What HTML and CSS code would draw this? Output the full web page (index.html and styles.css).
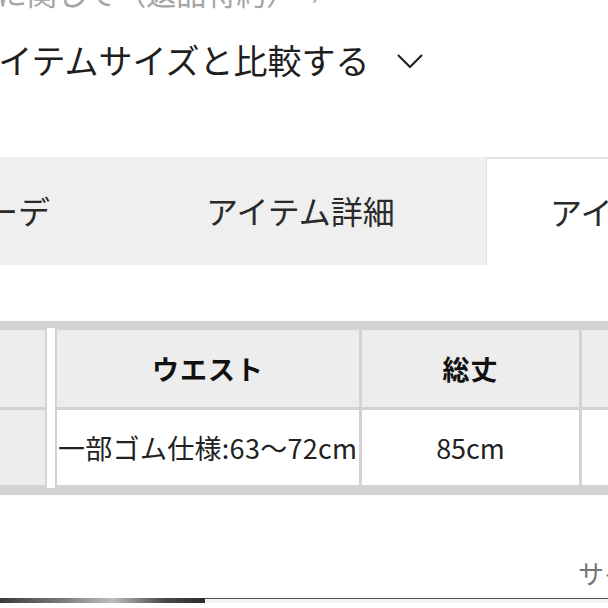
FILE: index.html
```html
<!DOCTYPE html>
<html lang="ja">
<head>
<meta charset="utf-8">
<link rel="stylesheet" href="styles.css">
</head>
<body>
<div class="page">
  <div class="top-link"><span class="top-link-text">サイズに関して（返品特約）　›</span></div>
  <div class="compare">
    <span class="compare-text">アイテムサイズと比較する</span>
    <svg class="chevron" width="28" height="18" viewBox="0 0 28 18"><path d="M2 4 L14 16 L26 4" fill="none" stroke="#222" stroke-width="2.2"/></svg>
  </div>
  <div class="tabs">
    <div class="tab tab-coord">コーデ</div>
    <div class="tab tab-detail">アイテム詳細</div>
    <div class="tab tab-size active">アイテムサイズ</div>
  </div>
  <div class="table-wrap">
    <div class="size-table">
      <div class="cell head c0"></div>
      <div class="strip"></div>
      <div class="cell head">ウエスト</div>
      <div class="cell head">総丈</div>
      <div class="cell head"></div>
      <div class="cell body c0"></div>
      <div class="cell body">一部ゴム仕様:63〜72cm</div>
      <div class="cell body">85cm</div>
      <div class="cell body"></div>
    </div>
  </div>
  <div class="guide"><span class="guide-text">サイズガイド</span></div>
  <div class="bottom-bar"><div class="bar-dark"></div><div class="bar-light"></div></div>
</div>
</body>
</html>
```
FILE: styles.css
```css
html, body {
  margin: 0;
  padding: 0;
  background: #fff;
}
body {
  font-family: "Noto Sans CJK JP", "Noto Sans", sans-serif;
  color: #222;
  width: 608px;
  height: 608px;
  overflow: hidden;
}
.page {
  width: 608px;
  height: 608px;
  overflow: hidden;
  display: flex;
  flex-direction: column;
}
.top-link {
  height: 11px;
  overflow: hidden;
  flex: none;
}
.top-link-text {
  display: block;
  font-size: 30px;
  line-height: 30px;
  margin-top: -23px;
  margin-left: -92px;
  color: #a5a5a5;
  white-space: nowrap;
}
.compare {
  flex: none;
  display: flex;
  align-items: center;
  height: 40px;
  margin-top: 29px;
  white-space: nowrap;
}
.compare-text {
  font-size: 34px;
  line-height: 40px;
  margin-left: -34px;
  color: #1e1e1e;
}
.chevron {
  margin-left: 26px;
  margin-top: 0;
}
.tabs {
  flex: none;
  display: flex;
  height: 108px;
  margin-top: 77px;
  white-space: nowrap;
}
.tab {
  background: #efefef;
  font-size: 32px;
  line-height: 106px;
  color: #2a2a2a;
  overflow: hidden;
  flex: none;
}
.tab-coord {
  width: 143px;
  text-indent: -46px;
}
.tab-detail {
  width: 343px;
  text-indent: 63px;
}
.tab-size {
  width: 200px;
  text-indent: 63px;
}
.tab.active {
  background: #fff;
  border-top: 2px solid #e2e2e2;
  border-left: 1px solid #e0e0e0;
  line-height: 104px;
}
.table-wrap {
  flex: none;
  margin-top: 56px;
  overflow: hidden;
  width: 608px;
}
.size-table {
  width: 700px;
  display: grid;
  grid-template-columns: 45px 12px 302px 220px 100px;
  grid-template-rows: 77px 75px;
  row-gap: 3px;
  background: #d3d3d3;
  padding: 9px 0 10px;
}
.cell {
  display: flex;
  align-items: center;
  justify-content: center;
  white-space: nowrap;
  margin-left: 3px;
}
.c0 {
  margin-left: 0;
}
.head {
  background: #ededed;
  font-size: 27px;
  font-weight: 700;
  color: #111;
  letter-spacing: 1px;
}
.body {
  background: #fff;
  font-size: 27px;
  color: #222;
}
.body.c0 {
  background: #ededed;
}
.strip {
  grid-row: 1 / 3;
  grid-column: 2;
  margin: -2px 0 -3px 2px;
  background: #fff;
  width: 8px;
}
.size-table .cell:nth-child(3),
.size-table .cell:nth-child(7) {
  margin-left: 0;
}
.size-table .cell:nth-child(7) {
  justify-content: flex-start;
  padding-left: 1px;
  letter-spacing: 0.3px;
}
.size-table .cell:nth-child(6) {
  grid-column: 1;
}
.size-table .cell:nth-child(7) {
  grid-column: 3;
}
.guide {
  flex: none;
  height: 40px;
  margin-top: 58px;
  padding-left: 578px;
  white-space: nowrap;
  overflow: hidden;
}
.guide-text {
  font-size: 26px;
  line-height: 40px;
  color: #777;
}
.bottom-bar {
  flex: none;
  margin-top: 5px;
  height: 5px;
  display: flex;
}
.bar-dark {
  width: 205px;
  background: linear-gradient(to right, #3a3a3a 0%, #7a7a7a 30%, #bdbdbd 55%, #4a4a4a 80%, #2c2c2c 100%);
}
.bar-light {
  flex: 1;
  border-top: 1px solid #555;
  background: #f2f2f2;
}
```
